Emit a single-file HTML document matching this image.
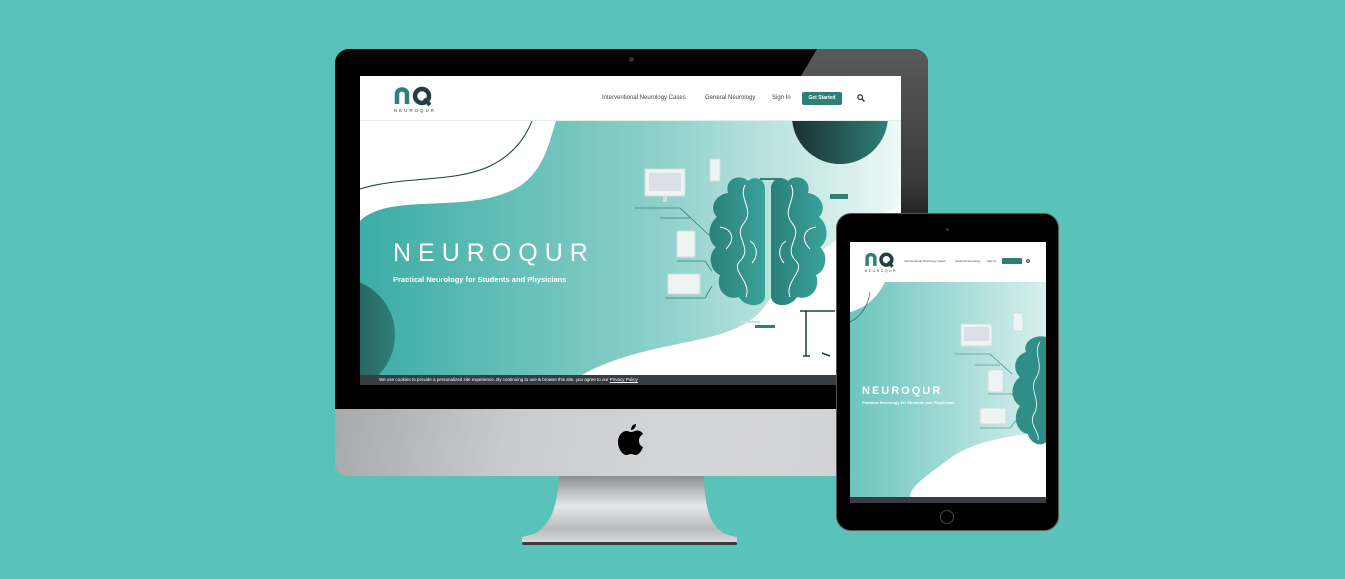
<!DOCTYPE html>
<html><head><meta charset="utf-8">
<style>
*{margin:0;padding:0;box-sizing:border-box}
body{width:1345px;height:579px;background:#59c2b9;position:relative;overflow:hidden;font-family:"Liberation Sans",sans-serif}
.abs{position:absolute}
.nav{font-size:6px;color:#444;position:absolute}
</style></head><body>

<!-- iMac stand -->
<svg class="abs" style="left:515px;top:470px" width="235" height="80">
<defs>
<linearGradient id="st" x1="0" y1="0" x2="0" y2="1"><stop offset="0" stop-color="#8d8f93"/><stop offset=".45" stop-color="#e6e7e9"/><stop offset=".8" stop-color="#b9bbbe"/><stop offset="1" stop-color="#d8d9db"/></linearGradient>
</defs>
<path d="M44,6 L189,6 C190,40 195,55 210,64 L222,67 L222,72 L7,72 L7,67 L19,64 C35,55 42,40 44,6Z" fill="url(#st)"/>
<rect x="7" y="72" width="215" height="3" rx="1.5" fill="#3a3c40"/>
</svg>

<!-- iMac body -->
<div class="abs" style="left:335px;top:49px;width:593px;height:361px;background:#000;border-radius:14px 14px 0 0;overflow:hidden">
  <svg class="abs" style="left:0;top:0" width="593" height="361">
    <defs><linearGradient id="gl" x1="0" y1="0" x2="0" y2="1"><stop offset="0" stop-color="#5a5a5a"/><stop offset=".6" stop-color="#3a3a3a"/><stop offset="1" stop-color="#000"/></linearGradient></defs>
    <path d="M482,0 L593,0 L593,220 L560,220 L560,27 L466,27Z" fill="url(#gl)"/>
  </svg>
  <div class="abs" style="left:294px;top:8px;width:5px;height:5px;border-radius:50%;background:#333"></div>
</div>
<div class="abs" style="left:335px;top:409px;width:593px;height:67px;background:linear-gradient(100deg,#a7a9ad 0%,#c9cbce 30%,#d5d6d8 60%,#cfd0d3 100%);border-radius:0 0 12px 12px"></div>
<svg class="abs" style="left:617px;top:422px" width="28" height="34" viewBox="0 0 28 34">
<path d="M19,2 C19,5 17,8 14,8 C14,5 16,2 19,2Z M14,10 C16,10 18,8.5 20,8.5 C23,8.5 25,10 26,12 C23,14 22,16 22,19 C22,22 24,24.5 26,25 C25,28 22,33 19,33 C17,33 16,32 14,32 C12,32 11,33 9,33 C6,33 1,27 1,20 C1,14 5,9 9.5,9 C11.5,9 12.5,10 14,10Z" fill="#000"/>
</svg>

<!-- iMac screen -->
<div class="abs" style="left:360px;top:76px;width:541px;height:309px;background:#fff;overflow:hidden">
  <svg class="abs" style="left:33px;top:8px" width="44" height="30" viewBox="0 0 44 30">
    <path d="M4,20 L4,10 C4,4 14,4 14,10 L14,20" stroke="#2e7f78" stroke-width="4.5" fill="none"/>
    <circle cx="29" cy="12" r="7" stroke="#1f3f40" stroke-width="4.5" fill="none"/>
    <path d="M31,15 L37,21" stroke="#1f3f40" stroke-width="4"/>
    <text x="1" y="28" font-size="4.2" letter-spacing="2.2" fill="#333" font-family="Liberation Sans">NEUROQUR</text>
  </svg>
  <div class="nav" style="left:242px;top:19px">Interventional Neurology Cases</div>
  <div class="nav" style="left:345px;top:19px">General Neurology</div>
  <div class="nav" style="left:412px;top:19px">Sign In</div>
  <div class="abs" style="left:442px;top:16px;width:40px;height:13px;background:#2e7f78;border-radius:2px;color:#fff;font-size:5px;font-weight:bold;text-align:center;line-height:13px">Get Started</div>
  <svg class="abs" style="left:497px;top:18px" width="8" height="8"><circle cx="3.2" cy="3.2" r="2.3" stroke="#333" stroke-width="1.2" fill="none"/><path d="M5,5 L7.5,7.5" stroke="#333" stroke-width="1.4"/></svg>
  <div class="abs" style="left:0;top:44px;width:541px;height:1px;background:#e3eeed"></div>
  <svg class="abs" style="left:0;top:45px" width="541" height="255" viewBox="0 0 541 255">
    <defs>
      <linearGradient id="tg" x1="0" y1="0" x2="1" y2="0"><stop offset="0" stop-color="#3aada5"/><stop offset=".55" stop-color="#8dd0ca"/><stop offset="1" stop-color="#eef8f7"/></linearGradient>
      <linearGradient id="dc" x1="0" y1="0" x2="1" y2="0"><stop offset="0" stop-color="#1c2f31"/><stop offset="1" stop-color="#2e7f78"/></linearGradient>
      <linearGradient id="br" x1="0" y1="0" x2="1" y2="0"><stop offset="0" stop-color="#2a7f79"/><stop offset="1" stop-color="#3aa39b"/></linearGradient>
    </defs>
    <path d="M0,100 C30,70 110,95 160,65 C185,48 190,18 196,0 L541,0 L541,85 C480,110 430,150 405,185 C375,228 290,215 220,255 L0,255Z" fill="url(#tg)"/>
    <path d="M0,68 C40,55 95,62 130,45 C155,33 166,15 172,0" stroke="#1f3f40" stroke-width="1" fill="none"/>
    <circle cx="480" cy="-5" r="48" fill="url(#dc)"/>
    <circle cx="-22" cy="214" r="57" fill="url(#dc)"/>
    <!-- devices -->
    <rect x="285" y="48" width="40" height="27" fill="#eef4f4" stroke="#cfdede"/><rect x="289" y="52" width="32" height="18" fill="#dcdfe8"/>
    <rect x="303" y="75" width="4" height="6" fill="#cfdede"/>
    <rect x="350" y="38" width="10" height="22" fill="#eef4f4" stroke="#cfdede"/>
    <rect x="317" y="110" width="18" height="26" fill="#eef4f4" stroke="#cfdede"/>
    <rect x="308" y="153" width="32" height="20" fill="#eef4f4" stroke="#cfdede"/>
    <path d="M275,87 L320,87 L350,115 M300,97 L330,97 M317,140 L345,140 L352,150 M305,177 L345,177 L352,165" stroke="#2e7f78" stroke-width=".8" fill="none"/>
    <rect x="400" y="57" width="22" height="2" fill="#2e7f78"/><rect x="470" y="73" width="18" height="5" fill="#2e7f78"/>
    <rect x="380" y="200" width="20" height="2" fill="#cfdede"/><rect x="395" y="204" width="20" height="3" fill="#2e7f78"/>
    <!-- brain -->
    <g fill="url(#br)">
      <path d="M405,68 C405,58 395,54 388,60 C380,52 364,58 368,72 C354,74 349,88 357,96 C347,104 347,120 356,126 C347,134 350,150 360,154 C355,168 366,180 379,176 C386,188 405,186 405,175Z"/>
      <path d="M411,68 C411,58 421,54 428,60 C436,52 452,58 448,72 C462,74 467,88 459,96 C469,104 469,120 460,126 C469,134 466,150 456,154 C461,168 450,180 437,176 C430,188 411,186 411,175Z"/>
    </g>
    <path d="M385,64 C378,78 395,88 384,102 C372,116 394,126 380,140 C370,150 392,160 386,176 M360,106 C372,108 376,118 366,128 M390,120 C398,125 398,135 392,142 M431,64 C438,78 421,88 432,102 C444,116 422,126 436,140 C446,150 424,160 430,176 M456,106 C444,108 440,118 450,128 M426,120 C418,125 418,135 424,142" stroke="#fff" stroke-width="1" fill="none"/>
    <path d="M440,190 L475,190 M446,190 L446,235 M443,235 L450,235 M470,235 L462,232" stroke="#1f3f40" stroke-width="1.5" fill="none"/>
  </svg>
  <div class="abs" style="left:33px;top:163px;color:#fff;font-size:25px;letter-spacing:7px;font-weight:500">NEUROQUR</div>
  <div class="abs" style="left:33px;top:199px;color:#fff;font-size:7.5px;font-weight:bold">Practical Neurology for Students and Physicians</div>
  <div class="abs" style="left:0;top:299px;width:541px;height:10px;background:#383d44;color:#fff;font-size:4.5px;padding-left:19px;line-height:10px">We use cookies to provide a personalized site experience. By continuing to use &amp; browse this site, you agree to our <u>Privacy Policy</u></div>
</div>

<!-- Tablet -->
<div class="abs" style="left:836px;top:213px;width:223px;height:318px;background:#000;border-radius:15px;border:1.5px solid #555"></div>
<div class="abs" style="left:946px;top:228px;width:3px;height:3px;border-radius:50%;background:#333"></div>
<div class="abs" style="left:940px;top:510px;width:14px;height:14px;border-radius:50%;border:1px solid #444"></div>
<div class="abs" style="left:850px;top:242px;width:196px;height:261px;background:#fff;overflow:hidden">
  <svg class="abs" style="left:14px;top:8px" width="34" height="24" viewBox="0 0 44 30">
    <path d="M4,20 L4,10 C4,4 14,4 14,10 L14,20" stroke="#2e7f78" stroke-width="4.5" fill="none"/>
    <circle cx="29" cy="12" r="7" stroke="#1f3f40" stroke-width="4.5" fill="none"/>
    <path d="M31,15 L37,21" stroke="#1f3f40" stroke-width="4"/>
    <text x="1" y="28" font-size="4.2" letter-spacing="2.2" fill="#333" font-family="Liberation Sans">NEUROQUR</text>
  </svg>
  <div class="abs" style="left:54px;top:17px;font-size:3px;color:#444">Interventional Neurology Cases</div>
  <div class="abs" style="left:105px;top:17px;font-size:3px;color:#444">General Neurology</div>
  <div class="abs" style="left:137px;top:17px;font-size:3px;color:#444">Sign In</div>
  <div class="abs" style="left:152px;top:16px;width:20px;height:6px;background:#2e7f78"></div>
  <svg class="abs" style="left:176px;top:17px" width="5" height="5"><circle cx="2" cy="2" r="1.4" stroke="#333" fill="none"/></svg>
  <svg class="abs" style="left:0;top:40px" width="196" height="215" viewBox="0 0 196 215">
    <defs><linearGradient id="tg2" x1="0" y1="0" x2="1" y2="0"><stop offset="0" stop-color="#6cc5bd"/><stop offset="1" stop-color="#d7efed"/></linearGradient></defs>
    <path d="M0,30 C20,25 30,10 35,0 L196,0 L196,150 C150,155 120,160 95,180 C75,195 60,205 60,215 L0,215Z" fill="url(#tg2)"/>
    <path d="M0,40 C10,35 18,25 20,10" stroke="#1f3f40" stroke-width=".6" fill="none"/>
    <rect x="111" y="42" width="31" height="22" fill="#eef4f4" stroke="#cfdede"/><rect x="114" y="45" width="25" height="14" fill="#dcdfe8"/>
    <rect x="163" y="31" width="10" height="18" fill="#eef4f4" stroke="#cfdede"/>
    <rect x="138" y="88" width="15" height="22" fill="#eef4f4" stroke="#cfdede"/>
    <rect x="130" y="126" width="26" height="16" fill="#eef4f4" stroke="#cfdede"/>
    <path d="M105,72 L140,72 L162,92 M125,83 L150,83 M138,112 L162,112 L170,122 M130,146 L160,146 L168,136" stroke="#2e7f78" stroke-width=".6" fill="none"/>
    <path d="M196,55 C185,52 172,60 176,70 C164,74 162,88 170,95 C160,102 160,118 170,124 C162,134 166,150 178,152 C180,162 192,165 196,160Z" fill="#2f8e87"/>
    <path d="M190,60 C182,72 195,82 186,96 C178,108 192,118 184,132 C178,142 190,150 188,158" stroke="#fff" stroke-width=".8" fill="none"/>
  </svg>
  <div class="abs" style="left:12px;top:143px;color:#fff;font-size:11px;letter-spacing:2px;font-weight:bold">NEUROQUR</div>
  <div class="abs" style="left:12px;top:158px;color:#fff;font-size:4px;font-weight:bold">Practical Neurology for Students and Physicians</div>
  <div class="abs" style="left:0;top:255px;width:196px;height:6px;background:#383d44"></div>
</div>
</body></html>
